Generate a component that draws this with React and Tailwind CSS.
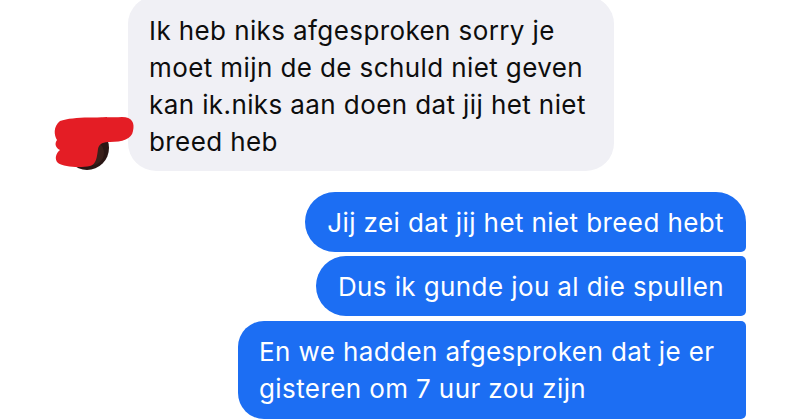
import React from "react";

const font = { fontFamily: "Inter, 'Noto Sans', sans-serif" };

function Avatar() {
  return (
    <svg width="84" height="58" viewBox="0 0 84 58" className="relative z-10 overflow-visible">
      <circle cx="35" cy="33" r="22" fill="#2a1614" />
      <circle cx="40" cy="38" r="12" fill="#4a2a22" opacity="0.5" />
      {/* scribble covering the face */}
      <path
        d="M8 6 C 22 1, 50 3, 70 2 C 80 2, 83 8, 81 16 C 80 24, 70 27, 58 27 C 52 27, 47 28, 46 34 C 45 42, 44 50, 38 51 C 28 53, 12 52, 6 48 C 2 44, 4 38, 8 35 C 4 33, 2 29, 5 25 C 2 20, 1 12, 8 6 Z"
        fill="#e41d25"
      />
    </svg>
  );
}

export default function App() {
  return (
    <div className="w-[800px] h-[420px] overflow-hidden bg-white text-[26px] leading-[37px] tracking-[0.4px]" style={font}>
      <div className="flex items-end">
        <div className="ml-[52px] mb-[-2px] w-[76px] shrink-0">
          <Avatar />
        </div>
        <div className="mt-[-4px] w-[486px] rounded-[28px] bg-[#f0f0f5] pl-[21px] pr-4 pt-[16px] pb-[11px] text-[#0d0d0d]">
          <div>Ik heb niks afgesproken sorry je</div>
          <div>moet mijn de de schuld niet geven</div>
          <div>kan ik.niks aan doen dat jij het niet</div>
          <div>breed heb</div>
        </div>
      </div>

      <div className="mt-[21px] flex flex-col items-end gap-[4px] pr-[54px] text-white">
        <div className="flex h-[60px] items-center rounded-l-[30px] rounded-tr-[30px] rounded-br-[5px] bg-[#1c6ef3] px-[22px]">
          Jij zei dat jij het niet breed hebt
        </div>
        <div className="flex h-[60px] items-center rounded-l-[30px] rounded-r-[5px] bg-[#1c6ef3] px-[22px]">
          Dus ik gunde jou al die spullen
        </div>
        <div className="mt-px w-[508px] rounded-l-[26px] rounded-r-[5px] bg-[#1c6ef3] py-3 pl-[21px] pr-[22px]">
          <div>En we hadden afgesproken dat je er</div>
          <div>gisteren om 7 uur zou zijn</div>
        </div>
      </div>
    </div>
  );
}
